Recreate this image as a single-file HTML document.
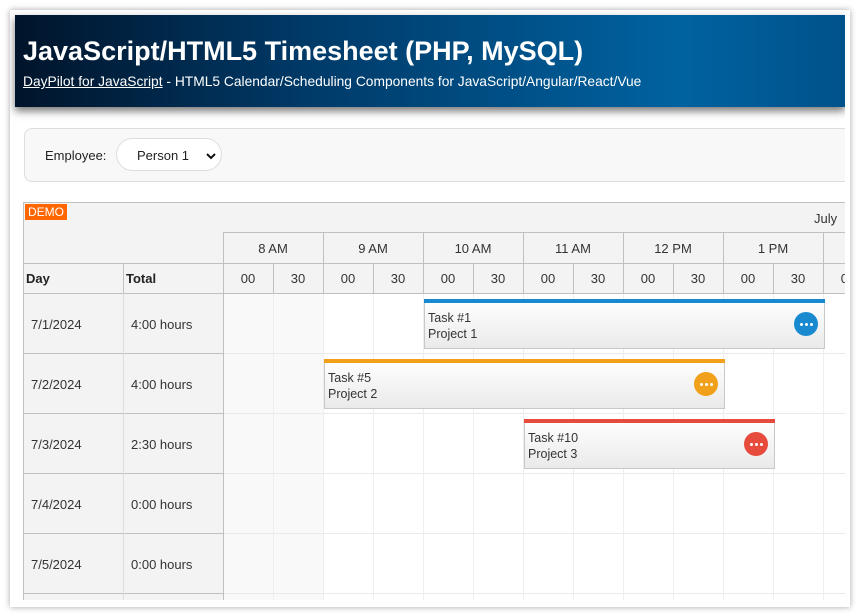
<!DOCTYPE html>
<html><head><meta charset="utf-8"><style>
*{box-sizing:border-box;margin:0;padding:0}
html,body{width:860px;height:616px;overflow:hidden}
body{background:#fff;font-family:"Liberation Sans",sans-serif;position:relative}
.frame{position:absolute;left:10px;top:10px;width:840px;height:597px;background:#fff;box-shadow:0 0 6px rgba(0,0,0,.35);overflow:hidden}
.hdr{position:absolute;left:5px;top:5px;width:830px;height:92px;background:linear-gradient(90deg,#00142a 0%,#003a68 35%,#0062a0 80%,#00528a 100%);box-shadow:0 4px 8px rgba(0,0,0,.55);color:#fff}
.hdr h1{position:absolute;left:8px;top:21px;font-size:27px;font-weight:bold;white-space:nowrap}
.hdr p{position:absolute;left:8px;top:59px;font-size:13.8px;white-space:nowrap}
.hdr a{color:#fff;text-decoration:underline}
.tb{position:absolute;left:14px;top:118px;width:840px;height:54px;background:#f8f8f8;border:1px solid #ddd;border-radius:8px}
.tb span{position:absolute;left:20px;top:19px;font-size:13px;color:#222}
.sel{position:absolute;left:91px;top:9px;width:106px;height:33px;background:#fff;border:1px solid #ddd;border-radius:17px;font-size:13px;color:#222}
.sel b{position:absolute;left:20px;top:9px;font-weight:normal}
.sel svg{position:absolute;left:89px;top:13px}
.a{position:absolute}
.c{position:absolute;font-size:13px;color:#333;text-align:center}
.ev{position:absolute;height:50px;background:linear-gradient(#fff,#eaeaea);border:1px solid #c8c8c8;font-size:12.5px;color:#333;line-height:16px;padding:10px 0 0 3px}
.ev i{position:absolute;left:-1px;right:-1px;top:-1px;height:4px}
.ev s{position:absolute;right:6px;top:12px;width:24px;height:24px;border-radius:12px}
.ev s b{position:absolute;top:11px;width:3px;height:3px;border-radius:2px;background:#fff}
</style></head><body>
<div class="frame">
<div class="tb"><span>Employee:</span><div class="sel"><b>Person 1</b><svg width="10" height="8" viewBox="0 0 10 8"><path d="M1 2 L5 6 L9 2" stroke="#111" stroke-width="2" fill="none"/></svg></div></div>
<div class="hdr"><h1>JavaScript/HTML5 Timesheet (PHP, MySQL)</h1><p><a>DayPilot for JavaScript</a> - HTML5 Calendar/Scheduling Components for JavaScript/Angular/React/Vue</p></div>
<div class="a" style="left:835px;top:0;width:5px;height:597px;background:#fff"></div>
</div>
<div class="a" style="left:23px;top:202px;width:822px;height:398px;overflow:hidden;background:#fff">
<div class="a" style="left:0;top:0;width:201px;height:92px;background:#f3f3f3;border:1px solid #c0c0c0"></div>
<div class="a" style="left:2px;top:2px;background:#f60;color:#fff;font-size:12px;padding:1px 3px">DEMO</div>
<div class="a" style="left:0;top:61px;width:201px;height:1px;background:#c0c0c0"></div>
<div class="a" style="left:100px;top:61px;width:1px;height:31px;background:#c0c0c0"></div>
<div class="c" style="left:3px;top:69px;font-weight:bold;color:#222">Day</div>
<div class="c" style="left:103px;top:69px;font-weight:bold;color:#222">Total</div>
<div class="a" style="left:200px;top:0;width:700px;height:92px;background:#f3f3f3;border-top:1px solid #c0c0c0;border-bottom:1px solid #c0c0c0"></div>
<div class="a" style="left:200px;top:30px;width:700px;height:1px;background:#c0c0c0"></div>
<div class="a" style="left:200px;top:61px;width:700px;height:1px;background:#c0c0c0"></div>
<div class="c" style="left:791px;top:9px">July</div>
<div id="hh"></div>
<div id="rows"></div>
<div class="ev" style="left:401px;top:97px;width:401px"><i style="background:#1a8ad0"></i>Task #1<br>Project 1<s style="background:#1a8ad0"><b style="left:6px"></b><b style="left:11px"></b><b style="left:16px"></b></s></div>
<div class="ev" style="left:301px;top:157px;width:401px"><i style="background:#f0a01a"></i>Task #5<br>Project 2<s style="background:#f0a01a"><b style="left:6px"></b><b style="left:11px"></b><b style="left:16px"></b></s></div>
<div class="ev" style="left:501px;top:217px;width:251px"><i style="background:#e64b3c"></i>Task #10<br>Project 3<s style="background:#e64b3c"><b style="left:6px"></b><b style="left:11px"></b><b style="left:16px"></b></s></div>
</div>
<script>
var h='',hrs=['8 AM','9 AM','10 AM','11 AM','12 PM','1 PM',''];
for(var i=0;i<7;i++){var x=200+i*100;
h+='<div class="a" style="left:'+x+'px;top:30px;width:1px;height:62px;background:#c0c0c0"></div>';
h+='<div class="c" style="left:'+x+'px;top:39px;width:100px">'+hrs[i]+'</div>';
h+='<div class="a" style="left:'+(x+50)+'px;top:61px;width:1px;height:31px;background:#c0c0c0"></div>';
h+='<div class="c" style="left:'+x+'px;top:69px;width:50px">00</div><div class="c" style="left:'+(x+50)+'px;top:69px;width:50px">30</div>';}
document.getElementById('hh').innerHTML=h;
var r='',d=['7/1/2024','7/2/2024','7/3/2024','7/4/2024','7/5/2024',''],t=['4:00 hours','4:00 hours','2:30 hours','0:00 hours','0:00 hours',''];
for(var j=0;j<6;j++){var y=91+j*60;
r+='<div class="a" style="left:0;top:'+y+'px;width:201px;height:61px;background:#f3f3f3;border:1px solid #c0c0c0"></div>';
r+='<div class="a" style="left:100px;top:'+y+'px;width:1px;height:60px;background:#ddd"></div>';
r+='<div class="c" style="left:8px;top:'+(y+24)+'px">'+d[j]+'</div><div class="c" style="left:108px;top:'+(y+24)+'px">'+t[j]+'</div>';
r+='<div class="a" style="left:201px;top:'+(y+1)+'px;width:100px;height:59px;background:#f9f9f9"></div>';
r+='<div class="a" style="left:201px;top:'+(y+60)+'px;width:700px;height:1px;background:#eaeaea"></div>';}
for(var k=1;k<14;k++){r+='<div class="a" style="left:'+(200+k*50)+'px;top:92px;width:1px;height:320px;background:#eee"></div>';}
document.getElementById('rows').innerHTML=r;
</script>
</body></html>
